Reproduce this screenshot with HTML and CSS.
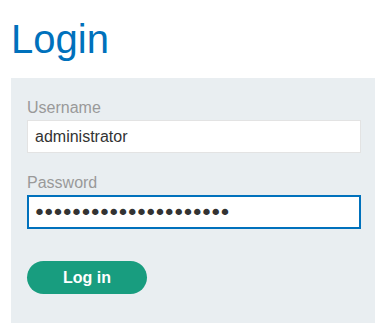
FILE: index.html
```
<!DOCTYPE html>
<html lang="en">
<head>
    <meta charset="UTF-8">
    <title>Login</title>
    <meta name="viewport" content="width=device-width, initial-scale=1.0">
    <link rel="stylesheet" href="styles.css">
</head>
<body>
    <div class="container">
        <h1>Login</h1>
        <!-- Login form -->
        <form class="login-form" onsubmit="return false;">
            <label for="username">Username</label>
            <input type="text" id="username" name="username" value="administrator">
            <label for="password">Password</label>
            <input type="password" id="password" name="password" class="focused" value="p4ssw0rdp4ssw0rdp4ssw" autofocus>
            <button type="submit" class="button">Log in</button>
        </form>
    </div>
</body>
</html>
```

FILE: styles.css
```
:root {
    --brand-blue: #0071bc;
    --panel-bg: #e9eef1;
    --label-text: #999;
    --button-green: #189d7f;
}
body {
    margin: 0;
    font-family: 'Liberation Sans', Arial, sans-serif;
    background: #fff;
    color: #333;
}
.container {
    padding-left: 11px;
}
h1 {
    margin: 16px 0 16px 0;
    font-size: 40px;
    line-height: 46px;
    font-weight: normal;
    color: var(--brand-blue);
}
/* Grey panel with the form */
.login-form {
    display: flex;
    flex-direction: column;
    align-items: flex-start;
    background: var(--panel-bg);
    padding: 20px 14px 40px 16px;
}
.login-form label {
    font-size: 16px;
    line-height: 19px;
    color: var(--label-text);
    margin-bottom: 3px;
}
.login-form input {
    box-sizing: border-box;
    width: 100%;
    height: 33px;
    margin: 0 0 20px 0;
    padding: 0 7px;
    font-family: 'Liberation Sans', Arial, sans-serif;
    font-size: 16px;
    color: #333;
    background: #fff;
    border: 1px solid #e3e3e3;
    border-radius: 0;
    outline: none;
}
/* Password field is shown with focus */
.login-form input.focused {
    height: 34px;
    border: 2px solid var(--brand-blue);
    padding: 0 4px;
    margin-bottom: 32px;
    font-family: 'DejaVu Sans', sans-serif;
    font-size: 22px;
    letter-spacing: -3.7px;
    caret-color: #333;
}
.button {
    width: 120px;
    height: 33px;
    border: none;
    border-radius: 17px;
    background: var(--button-green);
    color: #fff;
    font-family: 'Liberation Sans', Arial, sans-serif;
    font-size: 16px;
    font-weight: bold;
    cursor: pointer;
}
```
